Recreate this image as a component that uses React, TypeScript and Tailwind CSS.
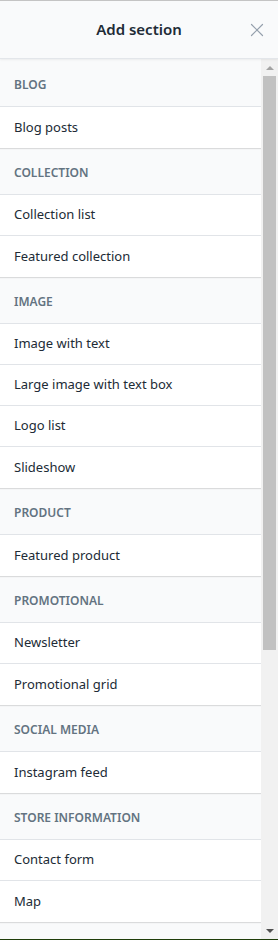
import { X } from 'lucide-react'

const groups = [
  { title: 'Blog', items: ['Blog posts'] },
  { title: 'Collection', items: ['Collection list', 'Featured collection'] },
  { title: 'Image', items: ['Image with text', 'Large image with text box', 'Logo list', 'Slideshow'] },
  { title: 'Product', items: ['Featured product'] },
  { title: 'Promotional', items: ['Newsletter', 'Promotional grid'] },
  { title: 'Social media', items: ['Instagram feed'] },
  { title: 'Store information', items: ['Contact form', 'Map'] },
]

export default function App() {
  return (
    <div
      className="flex h-[940px] w-[278px] flex-col overflow-hidden border-t border-[#c4c4c4] bg-[#f9fafb] text-[#212b36]"
      style={{ fontFamily: '"Noto Sans", "Open Sans", Arial, sans-serif' }}
    >
      {/* Header */}
      <div className="relative z-10 flex h-[58px] shrink-0 items-center justify-center border-b border-[#e3e6ea] bg-[#f9fafb] shadow-[0_1px_2px_rgba(0,0,0,0.06)]">
        <h2 className="text-[15px] font-semibold text-[#212b36]">Add section</h2>
        <button className="absolute right-[10px] top-[18px] text-[#95a0ad]">
          <X size={22} strokeWidth={1.3} />
        </button>
      </div>

      {/* Body */}
      <div className="flex min-h-0 flex-1">
        <div className="min-w-0 flex-1 overflow-hidden pt-px">
          {groups.map(group => (
            <div key={group.title}>
              <div className="flex h-[46px] items-center px-[14px] pt-[3px] text-[12px] font-semibold uppercase text-[#637381]">
                {group.title}
              </div>
              <ul className="border-t border-[#e1e4e8] bg-white shadow-[0_1px_1px_rgba(0,0,0,0.12)]">
                {group.items.map((item, i) => (
                  <li
                    key={item}
                    className={`flex h-[41px] items-center px-[14px] text-[13px] ${
                      i < group.items.length - 1 ? 'border-b border-[#e1e4e8]' : ''
                    }`}
                  >
                    {item}
                  </li>
                ))}
              </ul>
            </div>
          ))}
        </div>

        {/* Scrollbar */}
        <div className="flex w-[17px] shrink-0 flex-col bg-[#f1f1f1]">
          <div className="flex h-[17px] items-center justify-center">
            <div className="h-0 w-0 border-x-[4px] border-b-[4px] border-x-transparent border-b-[#a3a3a3]" />
          </div>
          <div className="mx-[2px] h-[574px] bg-[#c1c1c1]" />
          <div className="flex-1" />
          <div className="flex h-[17px] items-center justify-center">
            <div className="h-0 w-0 border-x-[4px] border-t-[4px] border-x-transparent border-t-[#505050]" />
          </div>
        </div>
      </div>
      <div className="h-px shrink-0 bg-[#1f3d0a]" />
    </div>
  )
}
